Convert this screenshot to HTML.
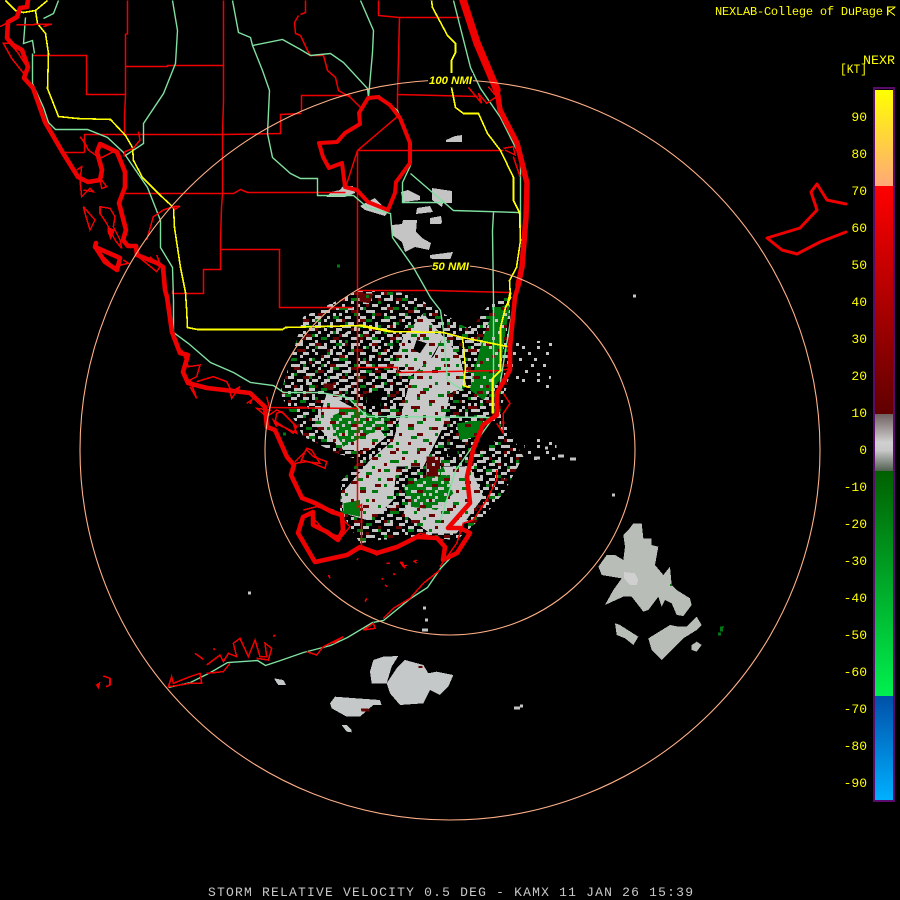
<!DOCTYPE html>
<html><head><meta charset="utf-8"><title>NEXRAD</title>
<style>
html,body{margin:0;padding:0;background:#000;width:900px;height:900px;overflow:hidden}
svg{display:block}
text{font-family:"Liberation Mono",monospace}
</style></head><body>
<svg width="900" height="900" viewBox="0 0 900 900" xmlns="http://www.w3.org/2000/svg" shape-rendering="crispEdges">
<defs>
<pattern id="pS" patternUnits="userSpaceOnUse" patternTransform="scale(3)" width="45" height="45"><path fill="none" stroke="#c4c4c4" stroke-width="3" d="M0 1.5h6M15 1.5h3M27 1.5h9M9 4.5h3M21 4.5h6M39 4.5h6M3 7.5h3M15 7.5h9M33 7.5h3M0 10.5h3M12 10.5h3M27 10.5h6M42 10.5h3M6 13.5h6M21 13.5h3M36 13.5h6M0 16.5h3M15 16.5h6M30 16.5h3M9 19.5h3M24 19.5h9M39 19.5h6M3 22.5h6M18 22.5h3M36 22.5h3M12 25.5h6M27 25.5h3M42 25.5h3M0 28.5h3M21 28.5h6M33 28.5h6M6 31.5h9M30 31.5h3M18 34.5h3M24 34.5h3M39 34.5h6M0 37.5h6M12 37.5h3M30 37.5h6M9 40.5h3M21 40.5h9M42 40.5h3M3 43.5h3M15 43.5h3M33 43.5h6"/></pattern>
<pattern id="pS2" patternUnits="userSpaceOnUse" patternTransform="scale(3)" width="33" height="33"><path fill="none" stroke="#c4c4c4" stroke-width="3" d="M3 1.5h3M21 1.5h3M12 7.5h3M27 7.5h3M0 13.5h3M18 13.5h3M9 19.5h3M30 19.5h3M24 25.5h3M3 28.5h3M15 31.5h3"/></pattern>
<pattern id="pR" patternUnits="userSpaceOnUse" patternTransform="scale(3)" width="57" height="57"><path fill="none" stroke="#680404" stroke-width="3" d="M6 1.5h6M33 1.5h3M18 7.5h3M45 7.5h6M0 13.5h3M27 13.5h9M12 19.5h6M51 19.5h3M39 25.5h3M3 28.5h6M24 31.5h6M48 34.5h6M15 40.5h3M33 40.5h6M6 46.5h3M24 49.5h3M45 49.5h3M36 55.5h6M12 55.5h3"/></pattern>
<pattern id="pG" patternUnits="userSpaceOnUse" patternTransform="scale(3)" width="51" height="51"><path fill="none" stroke="#007a10" stroke-width="3" d="M12 1.5h3M39 4.5h6M0 7.5h6M24 10.5h3M15 13.5h6M45 16.5h3M30 19.5h6M6 22.5h3M18 28.5h9M42 28.5h3M0 34.5h3M33 34.5h3M12 37.5h6M24 43.5h3M45 40.5h6M6 46.5h3M36 46.5h6"/></pattern>
<pattern id="pK" patternUnits="userSpaceOnUse" patternTransform="scale(3)" width="39" height="39"><path fill="none" stroke="#000" stroke-width="3" d="M6 1.5h3M24 4.5h3M12 10.5h6M33 13.5h3M0 19.5h3M21 22.5h3M9 28.5h3M30 31.5h6M18 37.5h3"/></pattern>
<linearGradient id="g1" x1="0" y1="0" x2="0" y2="1"><stop offset="0" stop-color="#ffff00"/><stop offset="1" stop-color="#ffa878"/></linearGradient>
<linearGradient id="g2" x1="0" y1="0" x2="0" y2="1"><stop offset="0" stop-color="#ff0000"/><stop offset="1" stop-color="#600000"/></linearGradient>
<linearGradient id="g3" x1="0" y1="0" x2="0" y2="1"><stop offset="0" stop-color="#706060"/><stop offset=".5" stop-color="#d0d0d0"/><stop offset=".64" stop-color="#c8c8c8"/><stop offset="1" stop-color="#506050"/></linearGradient>
<linearGradient id="g4" x1="0" y1="0" x2="0" y2="1"><stop offset="0" stop-color="#006000"/><stop offset="1" stop-color="#00f050"/></linearGradient>
<linearGradient id="g5" x1="0" y1="0" x2="0" y2="1"><stop offset="0" stop-color="#0050a8"/><stop offset="1" stop-color="#00b0ff"/></linearGradient>
</defs>
<rect width="900" height="900" fill="#000"/>

<!-- radar echoes -->
<g transform="translate(270,280) scale(.33333)">
<polygon fill="url(#pS)" points="100,110 270,30 420,40 520,100 600,150 660,70 720,40 720,280 690,400 760,530 700,640 650,700 560,780 440,770 330,780 270,790 210,690 215,600 270,540 200,520 100,470 30,340 60,250"/>
<polygon fill="url(#pS)" points="130,220 270,130 440,150 520,170 420,300 380,440 300,540 250,520 150,470 90,330"/>
<polygon fill="url(#pS2)" points="130,220 270,130 440,150 520,170 420,300 380,440 300,540 250,520 150,470 90,330"/>
<polygon fill="url(#pS2)" points="530,170 620,130 640,300 590,340 540,300"/>
<polygon fill="#c8c8c8" points="250,600 300,540 370,480 400,380 420,300 490,230 520,170 570,230 590,320 540,340 520,440 460,560 380,560 370,660 330,700 290,720 220,700 215,640"/>
<polygon fill="#c8c8c8" points="520,560 600,560 640,650 560,760 480,760 400,700 440,600"/>
<polygon fill="#c8c8c8" points="170,340 280,400 350,470 300,510 220,510 140,440"/>
<polygon fill="#c8c8c8" points="460,100 520,170 480,240 420,290 370,260 400,170"/>
<polygon fill="#007a10" points="180,410 250,380 340,420 360,450 300,460 220,500 190,450"/>
<polygon fill="#007a10" points="610,280 640,170 670,90 720,70 700,200 690,300 640,360 600,330"/>
<polygon fill="#007a10" points="560,430 640,420 620,470 570,480"/>
<polygon fill="#007a10" points="400,620 520,560 550,640 500,690 420,680"/>
<polygon fill="#007a10" points="220,670 270,660 270,710 220,700"/>
<polygon fill="url(#pS)" points="180,410 250,380 340,420 360,450 300,460 220,500 190,450"/>
<polygon fill="url(#pS2)" points="610,280 640,170 670,90 720,70 700,200 690,300 640,360 600,330"/>
<polygon fill="url(#pS)" points="400,620 520,560 550,640 500,690 420,680"/>
<polygon fill="#600404" points="470,530 510,530 510,590 470,590"/>
<polygon fill="url(#pS2)" points="470,530 510,530 510,590 470,590"/>
<polygon fill="#600404" points="265,40 310,40 300,70 270,65"/>
<polygon fill="#600404" points="160,310 190,310 190,330 160,330"/>
<polygon fill="url(#pG)" points="100,110 270,30 420,40 520,100 600,150 660,70 720,40 720,280 690,400 760,530 700,640 650,700 560,780 440,770 330,780 270,790 210,690 215,600 270,540 200,520 100,470 30,340 60,250"/>
<polygon fill="url(#pR)" points="100,110 270,30 420,40 520,100 600,150 660,70 720,40 720,280 690,400 760,530 700,640 650,700 560,780 440,770 330,780 270,790 210,690 215,600 270,540 200,520 100,470 30,340 60,250"/>
<polygon fill="url(#pG)" points="360,560 560,540 600,680 500,740 360,690"/>
<polygon fill="url(#pR)" points="340,540 560,480 600,640 440,720"/>
<polygon fill="url(#pK)" points="270,150 400,140 440,220 380,300 400,350 280,370 240,260"/>
<polygon fill="#000" points="440,180 470,190 450,220 430,210"/>
<polygon fill="#000" points="290,340 340,330 330,380 290,370"/>
<polygon fill="#000" points="530,505 560,505 565,530 535,530"/>
<polygon fill="#000" points="645,430 690,420 680,480 620,520 600,510 620,470"/>
<polygon fill="url(#pS)" points="620,520 700,480 750,520 690,620 640,640 600,590"/>
<polygon fill="url(#pS2)" points="760,480 860,470 860,540 770,540"/>
<polygon fill="url(#pS2)" points="720,190 850,180 840,330 730,300"/>
</g>
<path fill="none" stroke="#c4c4c4" stroke-width="3" d="M633 296h3M612 495h3M423 608h3M425 620h3M422 630h6M558 456h6M545 448h3M534 458h6M570 459h6M276 681h6M248 593h3M514 708h6M520 706h3"/>
<path fill="none" stroke="#007a10" stroke-width="3" d="M337 266h3M283 434h3M720 630h3M718 634h3"/>

<!-- north echoes -->
<g fill="#c4c4c4">
<polygon points="326,197 331,192 340,190 343,186 353,186 355,193 345,197"/>
<polygon points="360,206 375,198 388,212 385,216 365,210"/>
<polygon points="401,192 408,190 420,196 420,200 403,202"/>
<polygon points="432,188 452,191 452,203 443,203 442,207 432,200"/>
<polygon points="417,208 430,206 433,212 416,214"/>
<polygon points="430,218 441,216 442,222 441,224 430,224"/>
<polygon points="392,225 402,224 403,220 417,220 416,232 422,238 431,243 429,250 415,247 405,252 402,242 392,235"/>
<polygon points="430,255 453,252 450,260 440,262 430,258"/>
<polygon points="446,140 455,136 462,135 462,142 446,142"/>
</g>
<!-- SE echoes -->
<g transform="translate(590,510) scale(.33333)" fill="#b8bdb8">
<polygon points="130,40 155,40 160,85 185,85 185,105 205,110 195,165 220,195 240,170 245,225 260,240 300,265 305,285 280,318 260,315 245,280 225,270 215,290 205,260 175,300 160,305 125,260 100,260 45,285 70,240 95,205 35,195 25,170 50,135 75,135 100,150 105,110 100,75 115,60"/>
<polygon fill="#d0d0d0" points="102,186 135,190 145,210 140,225 120,225 102,205"/>
<polygon points="175,385 240,345 265,350 290,350 320,320 335,345 320,360 280,385 215,450 185,420"/>
<polygon points="305,405 320,395 335,405 320,425 305,420"/>
<polygon points="75,340 90,345 145,380 130,405 105,385 80,375"/>
<polygon fill="#007a10" points="240,222 246,222 246,228 240,228"/>
<polygon fill="#007a10" points="390,350 402,348 396,365 390,365"/>
</g>
<!-- S echoes -->
<g transform="translate(90,540) scale(.33333)" fill="#c4c8c8">
<polygon points="840,395 850,360 880,350 925,348 905,380 890,430 845,430"/>
<polygon points="890,430 920,385 945,360 1000,375 1015,400 1040,395 1090,405 1075,440 1050,465 1020,450 1000,490 930,495 900,460"/>
<polygon points="720,490 735,470 800,475 870,480 875,495 850,495 810,530 770,530 725,505"/>
<polygon points="552,415 580,420 588,435 565,435"/>
<polygon points="755,555 770,555 785,570 785,577 770,575"/>
<polygon fill="#600404" points="812,505 835,505 840,515 815,515"/>
<polygon fill="#600404" points="985,378 997,378 997,384 985,384"/>
</g>

<!-- county lines -->
<g fill="none" stroke="#f00000" stroke-width="1.5" transform="translate(.5,.5)" shape-rendering="auto">
<path d="M127 0V33L125 34V95L124 115V134M32 55H86V94H125M125 66H167V65H223M223 0V100L222 134V193L221 207L220 240V269H203V293H172V290"/>
<path d="M84 152H64M84 152V134H222L280 133V114L300 113H301M124 67M125 193H222H233L240 189L247 192H300H345"/>
<path d="M221 249H279V307H320H352M357 150V507L361 504V547M357 150H503M378 0V15L399 17H460M399 17L397 95V116M301 110V95H350M397 94L477 96M357 150L397 116M357 150L345 187M357 290H433L510 292M357 367H397V372L500 370L510 368M270 407L357 408"/>
<path d="M300 35L307 50L310 55H323L327 70L335 77L338 90L350 97L360 107M305 0V12L300 14M298 15L294 22L295 33L300 35"/>
</g>

<!-- green rivers / roads -->
<g fill="none" stroke="#80e0a0" stroke-width="1.4" transform="translate(.5,.5)" shape-rendering="auto">
<path d="M58 0L53 13L43 18M25 17L23 43L32 40L34 53M32 53V83L43 107L48 122L55 129H87L107 137L123 152L147 187L160 220V247L172 267L173 300V332L188 343L210 362L233 372L250 382L273 385L283 392H320L347 397L367 416L493 417"/>
<path d="M172 0L177 30L175 63L163 93L143 123V143L125 155"/>
<path d="M232 0L238 32L250 37L252 45L262 70L269 90L267 133L272 157L290 173L300 178H317V195H353L367 207L390 213L392 237L413 267L430 297L440 310L443 330L447 380L463 390"/>
<path d="M252 45L282 39L300 49L310 55L330 53L343 62L367 88L368 97L372 52L373 30L360 0M378 95L397 110L410 143V165L402 182V202H443M410 173L453 210L518 212M493 212L492 230L493 300V413M453 0L470 67L480 88L500 117L520 157V227M517 280L505 350L497 400M493 417L455 470L440 520"/>
<path d="M168 687L190 682L210 672L227 662L257 660L265 665L280 660L303 652L330 645L347 637L372 622L383 620L410 598L427 587L440 568L457 550"/>
</g>

<!-- yellow highways -->
<g fill="none" stroke="#ffff00" stroke-width="1.6" transform="translate(.5,.5)">
<path d="M5 0L15 10L23 12L35 10L47 0M35 10L37 23L45 33L48 53L47 88L58 116L77 118L110 119L125 135L132 147L133 160L142 177L160 195L173 207L174 227L180 267L185 292L186 307L187 327L197 329H282L285 327L360 325L390 331L443 332L462 337L492 343L507 346"/>
<path d="M462 337L465 367L463 385L469 387M500 347V370L492 378V413M500 347V327L505 307L510 297L509 280L516 267L520 240L519 212L513 200V177L500 150L487 133L478 113H463L455 107L451 87M451 75V60L455 52V43L447 35L432 7L431 0"/>
<path stroke-width="2.4" d="M360 325L390 331M492 378V395M510 292L507 305"/>
</g>

<!-- thin island detail -->
<g transform="scale(.33333)" fill="none" stroke="#f00000" stroke-width="4.6">
<path d="M10 130L35 175L75 225L80 200L55 160L30 130ZM240 410L255 430L265 450L300 475L340 455M230 510L245 500L240 540L245 590L270 565L280 575L250 570M250 620L285 660L270 690L255 640ZM300 620L330 625L345 650L340 680L360 720L365 745L345 720L320 670L300 640ZM285 725L300 760L340 800L385 790L370 780M415 770L470 815L480 800L450 770M470 765L480 790M305 540L320 560L305 565L300 540M415 395L420 420L400 445L375 455L372 470M520 620L490 630L460 650L440 720M520 620L540 618L525 628ZM50 75L155 72L130 80M0 80L20 70"/>
<polygon fill="#f00000" stroke="none" points="322,680 345,690 332,720 322,695"/>
</g>
<g transform="translate(300,0) scale(.33333)" fill="none" stroke="#f00000" stroke-width="4.6">
<path d="M505 262L545 310L535 280L560 310L590 290L565 260M610 445L640 440L645 465L615 450M640 470L660 530"/>
</g>
<g transform="translate(0,200) scale(.33333)" fill="none" stroke="#f00000" stroke-width="4.6">
<path d="M545 450L565 500L600 495L590 530L570 540L590 595L570 560M590 545L640 530L680 545L695 575L720 560L695 595L690 575M740 610L755 600L750 612M800 590L810 630L770 625L800 650L830 630L850 640L890 680L880 700L850 680L820 660L830 680M900 790L920 745L935 750L960 790L920 785L885 790"/>
</g>
<g transform="translate(270,280) scale(.33333)" fill="none" stroke="#f00000" stroke-width="4.6">
<path d="M20 400L35 395L70 430L80 460L50 445L15 430ZM75 545L110 510L130 530L170 545L165 565L130 550L95 540M100 690L140 680L190 690L240 740L215 770L170 760L135 720M290 810L320 825L380 800L450 760L520 780M260 840L265 835M350 850L360 850M390 845L400 860L410 855M430 845L440 840M680 570L680 600L650 660L610 720L580 730L560 790L510 860M700 340L720 370L700 400L700 460L680 430"/>
</g>
<g transform="translate(90,540) scale(.33333)" fill="none" stroke="#f00000" stroke-width="4.6">
<path d="M235 440L245 410L250 430L300 410L330 400L335 430L300 430L270 435ZM350 375L390 345L400 365L415 340L440 350L430 310L450 295L475 350L495 300L510 350L530 350L525 310L545 325L535 360L500 355M350 400L400 395L420 370M315 340L340 358M650 335L680 345L700 320L760 290L730 310M820 270L850 250L855 265ZM880 235L910 205L960 175L1000 130L1050 90M20 435L28 430L25 442ZM40 408L60 415L60 435L48 440M715 105L720 115M875 115L880 118M885 135L892 140M830 175L825 185M935 65L945 85M975 65L980 70M910 100L915 105M550 290L555 285M370 325L375 330"/>
</g>

<!-- thick coast -->
<g fill="none" stroke="#ee0000" stroke-linejoin="round" stroke-linecap="round" stroke-width="4.6" shape-rendering="auto">
<path d="M28 0L27 7L20 8L17 17L8 22L7 38L13 45L22 50L28 67L24 78L33 88L45 122L63 153L78 177L88 182L100 180L102 170L97 152L100 144L117 152L125 172L125 187L119 203L126 230L123 240L128 246L136 246L137 255L157 263L163 267L165 290L167 297L172 332L180 353L188 355L183 372L188 383L207 388L233 391L250 393L265 407L267 427L275 430L287 457L294 465L291 475L302 498L315 503L332 512L342 515L343 530L338 540L327 532L313 525L313 512L303 517L298 533L315 562L347 555L360 547L377 553L397 547L417 537L437 538L445 547L443 560L457 553L470 533L460 528L448 528L470 503L467 477L473 450L483 425L497 415L497 393L510 370L510 347L515 297L520 280"/>
<path d="M96 243L95 247L120 258L117 270L105 262L96 248"/>
<path stroke-width="5.5" d="M518 285L522 267L526 217L527 183L517 143L500 110L497 90"/>
<path stroke-width="7.5" d="M497 90L477 43L463 0"/>
<path stroke-width="4" d="M319 143L337 142L345 133L360 124L359 113L368 98L378 97L390 105L400 118L410 143L410 163L396 182L395 193L388 210L368 202L357 190L345 187L342 163L329 168L323 157Z"/>
<path stroke-width="3" d="M846 204L827 200L817 184L811 192L817 210L800 228L767 238L782 250L797 254L820 242L846 232"/>
</g>

<!-- range rings -->
<circle cx="450" cy="450" r="370" fill="none" stroke="#ffb088" stroke-width="1.1" shape-rendering="auto"/>
<circle cx="450" cy="450" r="185" fill="none" stroke="#ffb088" stroke-width="1.1" shape-rendering="auto"/>
<rect x="428" y="73" width="45" height="14" fill="#000"/>
<text x="429" y="84" font-size="11" font-style="italic" font-weight="bold" fill="#ffff00" textLength="43" lengthAdjust="spacingAndGlyphs" style="font-family:'Liberation Sans',sans-serif">100 NMI</text>
<rect x="432" y="259" width="38" height="13" fill="#000"/>
<text x="432" y="270" font-size="11" font-style="italic" font-weight="bold" fill="#ffff00" textLength="37" lengthAdjust="spacingAndGlyphs" style="font-family:'Liberation Sans',sans-serif">50 NMI</text>

<!-- headers -->
<text x="715" y="15" font-size="12" fill="#ffff00" textLength="168" lengthAdjust="spacing">NEXLAB-College of DuPage</text>
<path d="M895.5 7H887.5V15.5M895 7.5L889 11L895 15.5M888 7v8" fill="none" stroke="#ffff00" stroke-width="1"/>
<text x="863" y="64" font-size="13" fill="#ffff00" textLength="32" lengthAdjust="spacingAndGlyphs">NEXR</text>
<text x="840" y="73" font-size="13" fill="#ffff00" textLength="27" lengthAdjust="spacingAndGlyphs">[KT]</text>
<text x="208" y="896" font-size="13" fill="#c8c8c8" textLength="485" lengthAdjust="spacing">STORM RELATIVE VELOCITY 0.5 DEG - KAMX 11 JAN 26 15:39</text>

<!-- legend -->
<rect x="874" y="88" width="20" height="713" fill="none" stroke="#5a0a6a" stroke-width="2"/>
<rect x="875" y="90" width="18" height="96" fill="url(#g1)"/>
<rect x="875" y="186" width="18" height="228" fill="url(#g2)"/>
<rect x="875" y="414" width="18" height="57" fill="url(#g3)"/>
<rect x="875" y="471" width="18" height="225" fill="url(#g4)"/>
<rect x="875" y="696" width="18" height="104" fill="url(#g5)"/>
<g fill="#ffff00" font-size="13" text-anchor="end">
<text x="867" y="121">90</text>
<text x="867" y="158">80</text>
<text x="867" y="195">70</text>
<text x="867" y="232">60</text>
<text x="867" y="269">50</text>
<text x="867" y="306">40</text>
<text x="867" y="343">30</text>
<text x="867" y="380">20</text>
<text x="867" y="417">10</text>
<text x="867" y="454">0</text>
<text x="867" y="491">-10</text>
<text x="867" y="528">-20</text>
<text x="867" y="565">-30</text>
<text x="867" y="602">-40</text>
<text x="867" y="639">-50</text>
<text x="867" y="676">-60</text>
<text x="867" y="713">-70</text>
<text x="867" y="750">-80</text>
<text x="867" y="787">-90</text>
</g>
</svg>
</body></html>
